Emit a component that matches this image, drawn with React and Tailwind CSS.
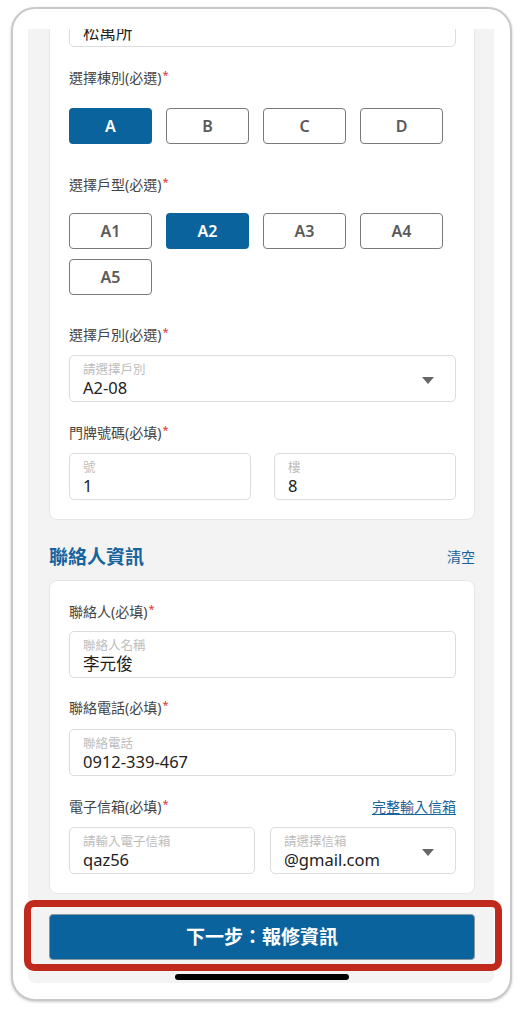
import React from "react";

const blue = "bg-[#0b639d]";

function Label({ children, right }) {
  return (
    <div className="flex h-[22px] items-center justify-between text-[14px] leading-[22px] text-[#444]">
      <span className="flex h-[22px] items-center">
        {children}
        <span className="ml-[1px] self-start text-[11px] leading-[16px] text-[#e5322d]">*</span>
      </span>
      {right}
    </div>
  );
}

function Field({ hint, value, caret, className = "" }) {
  return (
    <div className={`relative h-[47px] rounded-[5px] border border-[#dcdcdc] bg-white px-[13px] pt-[6px] ${className}`}>
      <div className="h-[15px] text-[12.5px] leading-[15px] text-[#bdbdbd]">{hint}</div>
      <div className="h-[22px] text-[16.5px] leading-[22px] text-[#222]">{value}</div>
      {caret ? (
        <svg className="absolute right-[21px] top-[21px]" width="12" height="7" viewBox="0 0 12 7">
          <path d="M0 0h12L6 7z" fill="#666" />
        </svg>
      ) : null}
    </div>
  );
}

function Choice({ label, active }) {
  return (
    <div
      className={`flex h-[36px] w-[83px] items-center justify-center rounded-[4px] text-[16px] font-semibold ${
        active ? `${blue} text-white` : "border border-[#7a7a7a] bg-white text-[#5a5a5a]"
      }`}
    >
      {label}
    </div>
  );
}

export default function App() {
  return (
    <div className="relative h-[1016px] w-[524px] bg-white pt-[7px]" style={{ fontFamily: '"Noto Sans", "Noto Sans CJK TC", sans-serif' }}>
      <div className="ml-[11px] h-[994px] w-[501px] rounded-[24px] border-2 border-[#c9c9c9] bg-white pl-[15px] pr-[16px] pt-[20px] shadow-[0_1px_3px_rgba(0,0,0,0.2)]">
        <div className="flex h-[954px] w-[466px] flex-col overflow-hidden rounded-b-[8px] bg-[#f3f3f3] pl-[21px] pr-[19px]">
          <section className="mt-[-49px] shrink-0 rounded-[8px] border border-[#e6e6e6] bg-white pb-[19px] pl-[19px] pr-[18px] pt-[19px]">
            <Field hint="地址" value="松萬所" />
            <div className="mt-[20px]"><Label>選擇棟別(必選)</Label></div>
            <div className="mt-[19px] flex gap-[14px]">
              <Choice label="A" active />
              <Choice label="B" />
              <Choice label="C" />
              <Choice label="D" />
            </div>
            <div className="mt-[30px]"><Label>選擇戶型(必選)</Label></div>
            <div className="mt-[17px] flex flex-wrap gap-x-[14px] gap-y-[10px]">
              <Choice label="A1" />
              <Choice label="A2" active />
              <Choice label="A3" />
              <Choice label="A4" />
              <Choice label="A5" />
            </div>
            <div className="mt-[29px]"><Label>選擇戶別(必選)</Label></div>
            <Field className="mt-[9px]" hint="請選擇戶別" value="A2-08" caret />
            <div className="mt-[20px]"><Label>門牌號碼(必填)</Label></div>
            <div className="mt-[9px] flex gap-[23px]">
              <Field className="flex-1" hint="號" value="1" />
              <Field className="flex-1" hint="樓" value="8" />
            </div>
          </section>

          <div className="mt-[24px] flex h-[26px] shrink-0 items-center justify-between leading-[26px]">
            <h2 className="text-[19px] font-bold text-[#17639d]">聯絡人資訊</h2>
            <span className="text-[14px] text-[#17639d]">清空</span>
          </div>

          <section className="mt-[10px] shrink-0 rounded-[8px] border border-[#e6e6e6] bg-white pb-[19px] pl-[19px] pr-[18px] pt-[20px]">
            <Label>聯絡人(必填)</Label>
            <Field className="mt-[8px]" hint="聯絡人名稱" value="李元俊" />
            <div className="mt-[19px]"><Label>聯絡電話(必填)</Label></div>
            <Field className="mt-[10px]" hint="聯絡電話" value="0912-339-467" />
            <div className="mt-[20px]">
              <Label right={<span className="text-[14px] text-[#17639d] underline underline-offset-2">完整輸入信箱</span>}>電子信箱(必填)</Label>
            </div>
            <div className="mt-[9px] flex gap-[15px]">
              <Field className="flex-1" hint="請輸入電子信箱" value="qaz56" />
              <Field className="flex-1" hint="請選擇信箱" value="@gmail.com" caret />
            </div>
          </section>

          <button className={`mt-[20px] h-[46px] w-full shrink-0 rounded-[4px] border border-[#8a96a0] ${blue} text-[19px] font-bold text-white`}>
            下一步：報修資訊
          </button>
          <div className="mx-auto mt-[14px] h-[6px] w-[174px] shrink-0 rounded-full bg-black" />
        </div>
      </div>
      <div className="absolute left-[24px] top-[900px] h-[71px] w-[478px] rounded-[10px] border-[7px] border-[#bf2a1c]" />
    </div>
  );
}
